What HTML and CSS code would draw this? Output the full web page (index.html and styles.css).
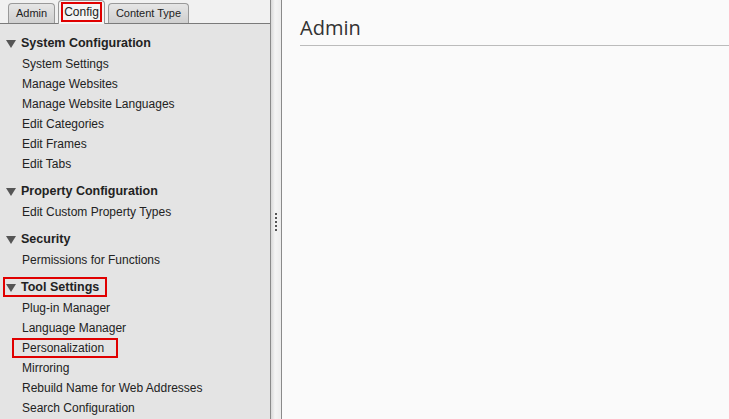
FILE: index.html
```html
<!DOCTYPE html>
<html>
<head>
<meta charset="utf-8">
<link rel="stylesheet" href="styles.css">
</head>
<body>
<div class="app">
  <aside class="side">
    <div class="tabs">
      <div class="tab">Admin</div>
      <div class="tab active"><span class="mark">Config</span></div>
      <div class="tab">Content Type</div>
    </div>
    <div class="tree">
      <div class="group">
        <div class="head"><span class="tri"></span><span>System Configuration</span></div>
        <div class="item">System Settings</div>
        <div class="item">Manage Websites</div>
        <div class="item">Manage Website Languages</div>
        <div class="item">Edit Categories</div>
        <div class="item">Edit Frames</div>
        <div class="item">Edit Tabs</div>
      </div>
      <div class="group">
        <div class="head"><span class="tri"></span><span>Property Configuration</span></div>
        <div class="item">Edit Custom Property Types</div>
      </div>
      <div class="group">
        <div class="head"><span class="tri"></span><span>Security</span></div>
        <div class="item">Permissions for Functions</div>
      </div>
      <div class="group">
        <div class="head boxed"><span class="tri"></span><span>Tool Settings</span></div>
        <div class="item">Plug-in Manager</div>
        <div class="item">Language Manager</div>
        <div class="item"><span class="box">Personalization</span></div>
        <div class="item">Mirroring</div>
        <div class="item">Rebuild Name for Web Addresses</div>
        <div class="item">Search Configuration</div>
      </div>
    </div>
  </aside>
  <div class="splitter"><span class="grip"></span></div>
  <main class="content">
    <h1 class="title">Admin</h1>
  </main>
</div>
</body>
</html>
```

FILE: styles.css
```css
html, body {
  margin: 0;
  padding: 0;
  height: 100%;
  overflow: hidden;
}
body {
  font-family: "Liberation Sans", Arial, sans-serif;
  font-size: 12px;
  color: #222;
}
.app {
  display: flex;
  height: 419px;
}
.side {
  width: 270px;
  background: #e4e4e4;
  border-right: 1px solid #8a8a8a;
  display: flex;
  flex-direction: column;
}
.tabs {
  height: 26px;
  box-sizing: border-box;
  background: #f1f1f1;
  border-bottom: 1px solid #7a7a7a;
  display: flex;
  align-items: flex-end;
  gap: 3px;
  padding-left: 8px;
}
.tab {
  height: 20px;
  box-sizing: border-box;
  padding: 0 7px;
  border: 1px solid #999;
  border-bottom: none;
  border-radius: 4px 4px 0 0;
  background: linear-gradient(#e6e6e6, #cfcfcf);
  font-size: 11px;
  line-height: 19px;
  color: #222;
}
.tab.active {
  padding: 1px 2px 0;
  background: #f4f4f4;
  border-color: #999;
  margin-bottom: -1px;
  height: 24px;
}
.mark {
  display: block;
  border: 2px solid #e00000;
  height: 20px;
  box-sizing: border-box;
  padding: 0 1px;
  font-size: 12px;
  line-height: 17px;
}
.tree {
  padding-top: 9px;
}
.group {
  margin-bottom: 7px;
}
.head {
  display: flex;
  align-items: center;
  height: 20px;
  margin-bottom: 1px;
  font-weight: bold;
  font-size: 12.5px;
  padding-left: 6px;
  gap: 5px;
  box-sizing: border-box;
}
.head.boxed {
  width: 104px;
  margin-left: 3px;
  padding-left: 1px;
  border: 2px solid #e00000;
}
.tri {
  width: 0;
  height: 0;
  border-left: 5px solid transparent;
  border-right: 5px solid transparent;
  border-top: 8px solid #555;
  margin-top: 2px;
}
.item {
  height: 20px;
  line-height: 20px;
  padding-left: 22px;
}
.box {
  display: inline-block;
  border: 2px solid #e00000;
  height: 20px;
  line-height: 16px;
  box-sizing: border-box;
  padding: 0 12px 0 8px;
  margin-left: -10px;
  vertical-align: top;
}
.splitter {
  width: 10px;
  background: linear-gradient(to right, #d8d8d8, #f4f4f4 40%, #ececec);
  border-right: 1px solid #8a8a8a;
  display: flex;
  align-items: center;
  justify-content: center;
}
.grip {
  width: 2px;
  height: 18px;
  background: repeating-linear-gradient(#555 0 2px, transparent 2px 4px);
  margin-top: 24px;
}
.content {
  flex: 1;
  background: #fafafa;
  padding: 0 0 0 18px;
}
.title {
  margin: 15px 0 0;
  font-family: "Open Sans", "Liberation Sans", sans-serif;
  font-weight: normal;
  font-size: 20px;
  line-height: 26px;
  color: #333;
  padding-bottom: 4px;
  border-bottom: 1px solid #bbb;
}
```
